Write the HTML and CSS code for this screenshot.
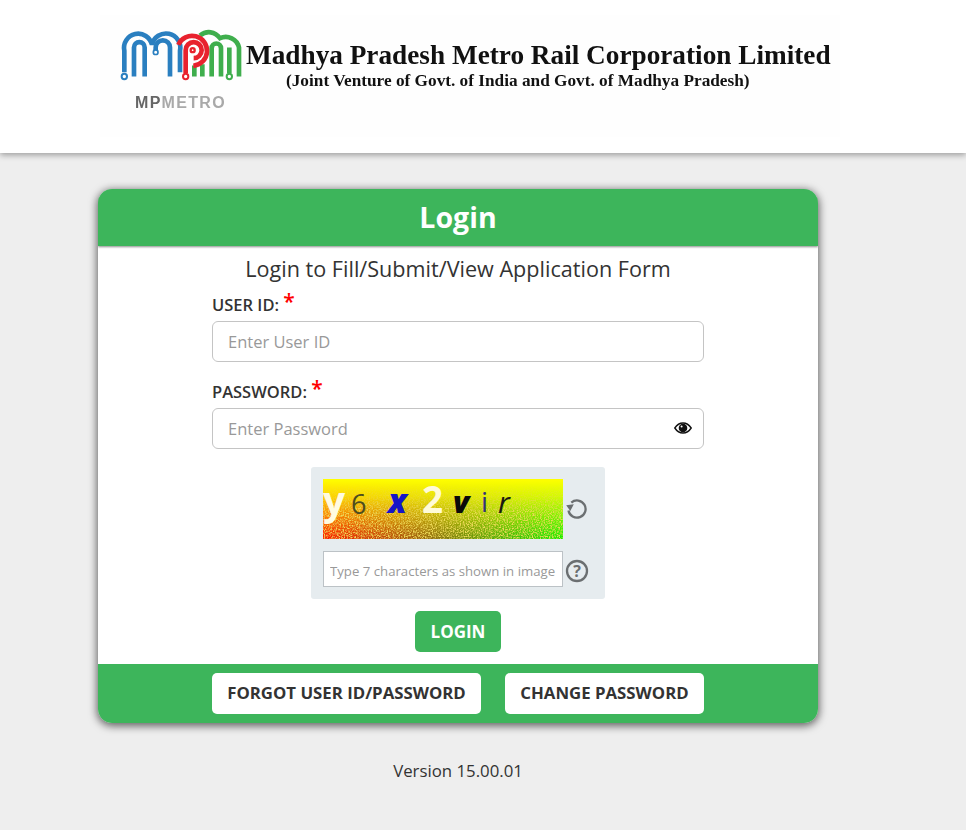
FILE: index.html
```html
<!DOCTYPE html>
<html lang="en">
<head>
<meta charset="utf-8">
<title>Login</title>
<link rel="stylesheet" href="styles.css">
</head>
<body>
<header class="site-header">
  <div class="banner">
    <div class="brand">
      <svg class="brand-mark" viewBox="0 0 405 170" width="135" height="57" aria-hidden="true">
        <g fill="none" stroke="#2a7fc0" stroke-width="14">
          <path d="M28 132V68A41 41 0 0 1 111 50A41 41 0 0 1 195 68V132"/>
          <path d="M57 145V58A16 16 0 0 1 89 58V145"/>
          <path d="M122 66V58A21 21 0 0 1 165 58V145"/>
          <circle cx="28" cy="145" r="8" stroke-width="6"/>
          <circle cx="122" cy="72" r="7" stroke-width="5"/>
        </g>
        <g fill="none" stroke="#3fae4d" stroke-width="14">
          <path d="M255 22C275 6 300 10 315 30A41 41 0 0 1 372 58V145"/>
          <path d="M238 145V112M262 145V108M290 145V60A14 14 0 0 1 318 60V145"/>
          <path d="M343 135V58"/>
          <circle cx="343" cy="145" r="8" stroke-width="6"/>
        </g>
        <g fill="none" stroke="#e8222e" stroke-width="14">
          <path d="M190 50A45 45 0 1 1 235 113"/>
          <path d="M212 135V66A24 24 0 1 1 236 90"/>
          <circle cx="233" cy="66" r="6" stroke-width="7"/>
          <circle cx="212" cy="145" r="8" stroke-width="6"/>
        </g>
      </svg>
      <div class="brand-name"><b>MP</b>METRO</div>
    </div>
    <div class="org">
      <div class="org-name">Madhya Pradesh Metro Rail Corporation Limited</div>
      <div class="org-sub">(Joint Venture of Govt. of India and Govt. of Madhya Pradesh)</div>
    </div>
  </div>
</header>

<main class="page">
  <section class="card">
    <h1 class="card-title">Login</h1>
    <div class="card-body">
      <p class="lead">Login to Fill/Submit/View Application Form</p>
      <form class="form">
        <div class="field">
          <label class="field-label" for="uid">USER ID: <span class="req">*</span></label>
          <input class="field-input" id="uid" type="text" placeholder="Enter User ID">
        </div>
        <div class="field">
          <label class="field-label" for="pwd">PASSWORD: <span class="req">*</span></label>
          <div class="input-wrap">
            <input class="field-input" id="pwd" type="password" placeholder="Enter Password">
            <svg class="eye" viewBox="0 0 18 12" width="18" height="12" aria-hidden="true">
              <path d="M.8 6C3 2.6 5.800 1 9 1s6 1.600 8.200 5C15 9.400 12.200 11 9 11S3 9.400.8 6Z" fill="#fff" stroke="#111" stroke-width="1.400"/>
              <circle cx="9" cy="6" r="4.300" fill="#111"/>
              <circle cx="7.600" cy="4.500" r="1" fill="#fff"/>
            </svg>
          </div>
        </div>
        <div class="captcha">
          <div class="captcha-row">
            <div class="captcha-image">
              <svg class="captcha-noise" width="240" height="60" aria-hidden="true">
                <filter id="grain" x="0" y="0" width="100%" height="100%"><feTurbulence type="fractalNoise" baseFrequency="0.75" numOctaves="2" seed="4"/><feColorMatrix values="0 0 0 0 .85  0 0 0 0 .7  0 0 0 0 .1  3 0 0 0 -1.200"/></filter>
                <rect width="240" height="60" filter="url(#grain)"/>
              </svg>
              <span class="c c1">y</span><span class="c c2">6</span><span class="c c3">x</span><span class="c c4">2</span><span class="c c5">v</span><span class="c c6">i</span><span class="c c7">r</span>
            </div>
            <svg class="captcha-icon" viewBox="0 0 24 24" width="24" height="24" aria-hidden="true">
              <path d="M6.300 5.600A8.600 8.600 0 1 1 3.500 13.500" fill="none" stroke="#6b6f71" stroke-width="2.300"/>
              <path d="M1.200 8.300L8.800 7.300L5.300 14Z" fill="#6b6f71"/>
            </svg>
          </div>
          <div class="captcha-row">
            <input class="captcha-input" type="text" placeholder="Type 7 characters as shown in image">
            <svg class="captcha-icon captcha-help" viewBox="0 0 24 24" width="24" height="24" aria-hidden="true">
              <circle cx="12" cy="12" r="10" fill="none" stroke="#6b6f71" stroke-width="2.300"/>
              <text x="12" y="17.500" text-anchor="middle" class="help-mark">?</text>
            </svg>
          </div>
        </div>
        <button class="btn-login" type="button">LOGIN</button>
      </form>
    </div>
    <div class="card-footer">
      <button class="btn-alt btn-forgot" type="button">FORGOT USER ID/PASSWORD</button>
      <button class="btn-alt btn-change" type="button">CHANGE PASSWORD</button>
    </div>
  </section>
  <p class="version">Version 15.00.01</p>
</main>
</body>
</html>
```
FILE: styles.css
```css
* { box-sizing: border-box; }
html, body { margin: 0; padding: 0; }
body {
  background: #eeeeee;
  color: #333;
  font-family: "Open Sans", sans-serif;
  height: 830px;
  overflow: hidden;
}
.site-header {
  background: #fff;
  height: 153px;
  box-shadow: 0 2px 6px rgba(0,0,0,.35);
  padding-top: 15px;
}
.banner {
  width: 740px;
  height: 122px;
  margin-left: 100px;
  background: #fefefe;
  display: flex;
  padding: 13px 0 0 21px;
  filter: blur(.3px);
}
.brand { width: 125px; flex: none; }
.brand-mark { display: block; margin-left: -6px; }
.brand-name {
  font-family: "Liberation Sans", sans-serif;
  font-weight: 700;
  font-size: 16px;
  line-height: 18px;
  letter-spacing: 1.300px;
  color: #a9a9a9;
  margin: 9px 0 0 14px;
  white-space: nowrap;
}
.brand-name b { color: #666; }
.org {
  font-family: "Liberation Serif", serif;
  font-weight: 700;
  color: #111;
  white-space: nowrap;
}
.org-name { font-size: 27.250px; line-height: 30px; margin-top: 12px; }
.org-sub { font-size: 17.250px; line-height: 20px; margin: 1px 0 0 40px; }

.page { padding-top: 36px; }
.card {
  width: 720px;
  margin-left: 98px;
  height: 534px;
  background: #fff;
  border-radius: 14px;
  box-shadow: 0 2px 8px 1px rgba(0,0,0,.6);
  display: flex;
  flex-direction: column;
  overflow: hidden;
}
.card-title {
  margin: 0;
  height: 57px;
  background: #3db55b;
  color: #fff;
  font-size: 28.500px;
  font-weight: 700;
  line-height: 56px;
  text-align: center;
  box-shadow: 0 1px 2px rgba(0,0,0,.45);
  position: relative;
}
.card-body { flex: 1; }
.lead {
  margin: 8px 0 0;
  font-size: 21.600px;
  font-weight: 400;
  line-height: 30px;
  text-align: center;
}
.form {
  width: 492px;
  margin: 5px auto 0;
  display: flex;
  flex-direction: column;
}
.field { margin-bottom: 14px; }
.field-label {
  display: block;
  font-size: 16.500px;
  font-weight: 600;
  line-height: 23px;
  height: 32px;
  padding-top: 4px;
}
.req {
  color: #f00;
  font-size: 21px;
  line-height: 14px;
  position: relative;
  top: -2px;
}
.field-input {
  display: block;
  width: 100%;
  height: 41px;
  border: 1px solid #c4c4c4;
  border-radius: 6px;
  padding: 0 15px;
  font: 400 16.500px "Open Sans", sans-serif;
  color: #333;
  background: #fff;
}
.field-input::placeholder { color: #999; opacity: 1; }
.input-wrap { position: relative; }
.eye { position: absolute; right: 12px; top: 14px; }
.captcha {
  align-self: center;
  width: 294px;
  height: 132px;
  margin-top: 4px;
  background: #e6ecef;
  border-radius: 3px;
  padding: 12px 0 0 12px;
  display: flex;
  flex-direction: column;
  gap: 12px;
}
.captcha-row { display: flex; align-items: center; gap: 2px; }
.captcha-image {
  position: relative;
  width: 240px;
  height: 60px;
  flex: none;
  display: flex;
  align-items: flex-start;
  background:
    linear-gradient(to bottom, #ffff00 0%, rgba(255,255,0,.8) 30%, rgba(255,255,0,0) 100%),
    linear-gradient(to right, #ff1400 0%, #8f6a10 45%, #12f000 100%);
  overflow: hidden;
}
.captcha-noise {
  position: absolute;
  left: 0;
  top: 0;
  -webkit-mask-image: linear-gradient(to bottom, transparent 8%, #000 55%);
  mask-image: linear-gradient(to bottom, transparent 8%, #000 55%);
}
.c { position: relative; font-family: "Open Sans", sans-serif; line-height: 1; }
.c1 { font-size: 39px; font-weight: 700; color: #fffbe0; width: 28px; margin-top: 1px; }
.c2 { font-size: 27px; color: #4d4d1e; width: 37px; margin-top: 11px; }
.c3 { font-size: 33px; font-weight: 800; font-style: italic; color: #1515c8; width: 34px; margin-top: 5px; }
.c4 { font-size: 37px; font-weight: 700; color: #fffbd8; width: 31px; margin-top: 1px; }
.c5 { font-size: 30px; font-weight: 800; font-style: italic; color: #0a0a0a; width: 28px; margin-top: 8px; }
.c6 { font-size: 28px; color: #33337a; width: 17px; margin-top: 8px; }
.c7 { font-size: 30px; font-style: italic; color: #1a1a10; margin-top: 8px; }
.captcha-icon { flex: none; }
.captcha-help { margin-top: 4px; }
.help-mark { font: 700 16px "Open Sans", sans-serif; fill: #6b6f71; }
.captcha-input {
  width: 240px;
  height: 36px;
  flex: none;
  border: 1px solid #bcc2c6;
  background: #fff;
  padding: 3px 6px 0;
  font: 400 13.200px "Open Sans", sans-serif;
}
.captcha-input::placeholder { color: #999; opacity: 1; }
.btn-login {
  align-self: center;
  width: 86px;
  height: 41px;
  margin-top: 12px;
  border: 0;
  border-radius: 5px;
  background: #3db55b;
  color: #fff;
  font: 700 17px "Open Sans", sans-serif;
  padding: 0 0 1px;
}
.card-footer {
  height: 59px;
  background: #3db55b;
  display: flex;
  justify-content: center;
  gap: 24px;
  padding-top: 9px;
}
.btn-alt {
  height: 41px;
  border: 0;
  border-radius: 5px;
  background: #fff;
  color: #333;
  font: 700 16.800px "Open Sans", sans-serif;
  padding: 0 0 2px;
}
.btn-forgot { width: 269px; }
.btn-change { width: 199px; }
.version {
  width: 720px;
  margin: 37px 0 0 98px;
  font-size: 16.800px;
  line-height: 22px;
  text-align: center;
  color: #333;
}
```
